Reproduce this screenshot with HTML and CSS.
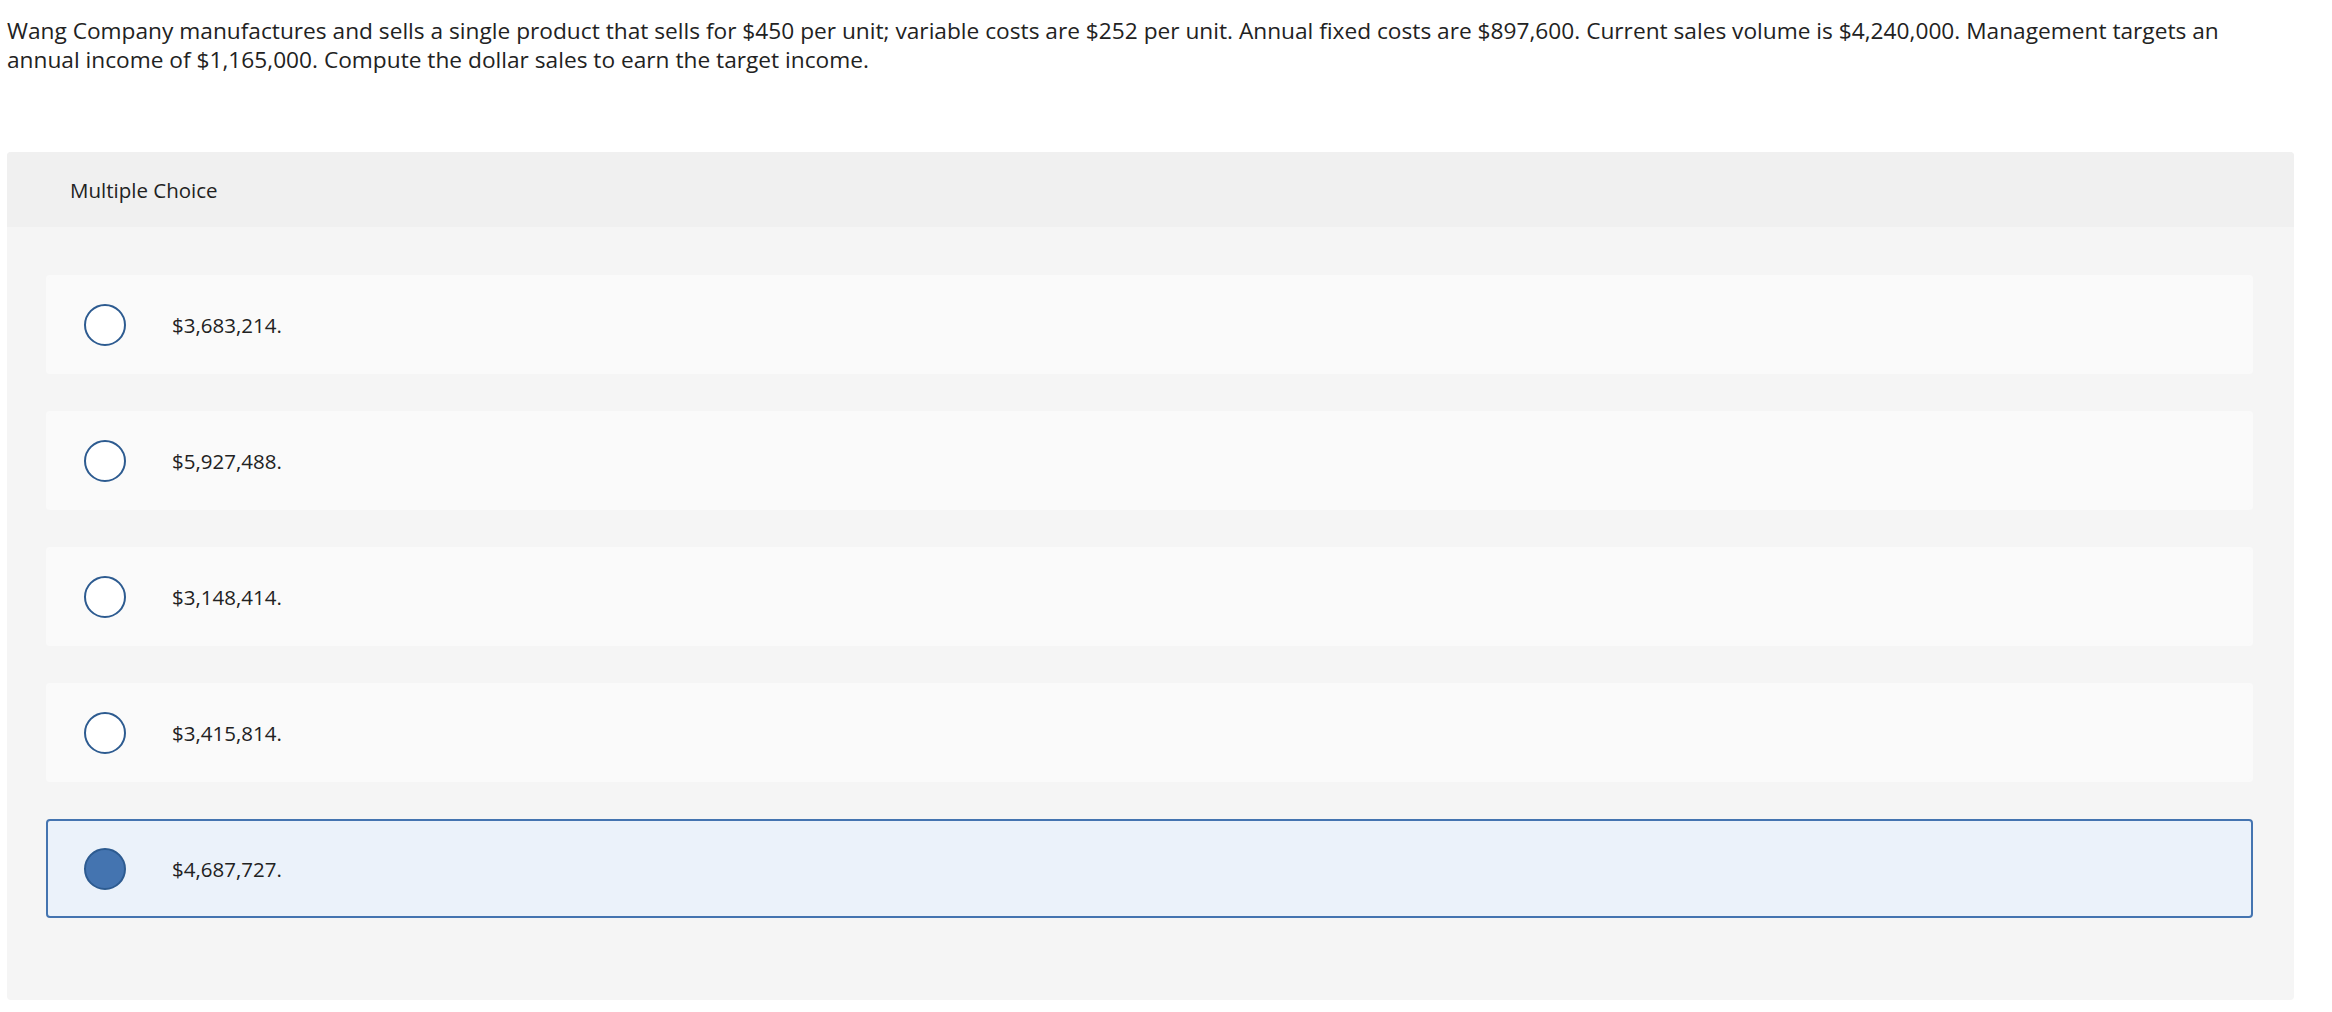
FILE: index.html
```html
<!DOCTYPE html>
<html>
<head>
<meta charset="utf-8">
<link rel="stylesheet" href="styles.css">
</head>
<body>
<div class="page">
  <p class="question">Wang Company manufactures and sells a single product that sells for $450 per unit; variable costs are $252 per unit. Annual fixed costs are $897,600. Current sales volume is $4,240,000. Management targets an annual income of $1,165,000. Compute the dollar sales to earn the target income.</p>
  <div class="mc">
    <div class="mc-head">Multiple Choice</div>
    <div class="mc-body">
      <div class="opt"><span class="radio"></span><span class="label">$3,683,214.</span></div>
      <div class="opt"><span class="radio"></span><span class="label">$5,927,488.</span></div>
      <div class="opt"><span class="radio"></span><span class="label">$3,148,414.</span></div>
      <div class="opt"><span class="radio"></span><span class="label">$3,415,814.</span></div>
      <div class="opt selected"><span class="radio"></span><span class="label">$4,687,727.</span></div>
    </div>
  </div>
</div>
</body>
</html>
```
FILE: styles.css
```css
html, body {
  margin: 0;
  padding: 0;
  background: #ffffff;
}
.page {
  padding: 0 38px 0 7px;
  font-family: "Open Sans", "Noto Sans", sans-serif;
  color: #222222;
}
.question {
  margin: 0;
  padding-top: 16px;
  font-size: 22.7px;
  line-height: 29px;
  height: 152px;
  box-sizing: border-box;
  max-width: 2270px;
}
.mc {
  background: #f5f5f5;
  border-radius: 4px;
  width: 2287px;
  overflow: hidden;
}
.mc-head {
  background: #f0f0f0;
  height: 75px;
  display: flex;
  align-items: center;
  padding-left: 63px;
  font-size: 20.5px;
}
.mc-body {
  padding: 48px 41px 82px 39px;
  display: flex;
  flex-direction: column;
  gap: 37px;
}
.opt {
  background: #fafafa;
  border-radius: 4px;
  height: 99px;
  box-sizing: border-box;
  display: flex;
  align-items: center;
  padding-left: 36px;
  border: 2px solid #fafafa;
}
.opt.selected {
  background: #ebf2fa;
  border-color: #4474b0;
}
.radio {
  width: 42px;
  height: 42px;
  box-sizing: border-box;
  border-radius: 50%;
  border: 2px solid #2d5b90;
  background: #ffffff;
  flex: none;
}
.selected .radio {
  background: #4474b0;
  border-color: #2d5b90;
}
.label {
  margin-left: 46px;
  font-size: 20.5px;
}
```
